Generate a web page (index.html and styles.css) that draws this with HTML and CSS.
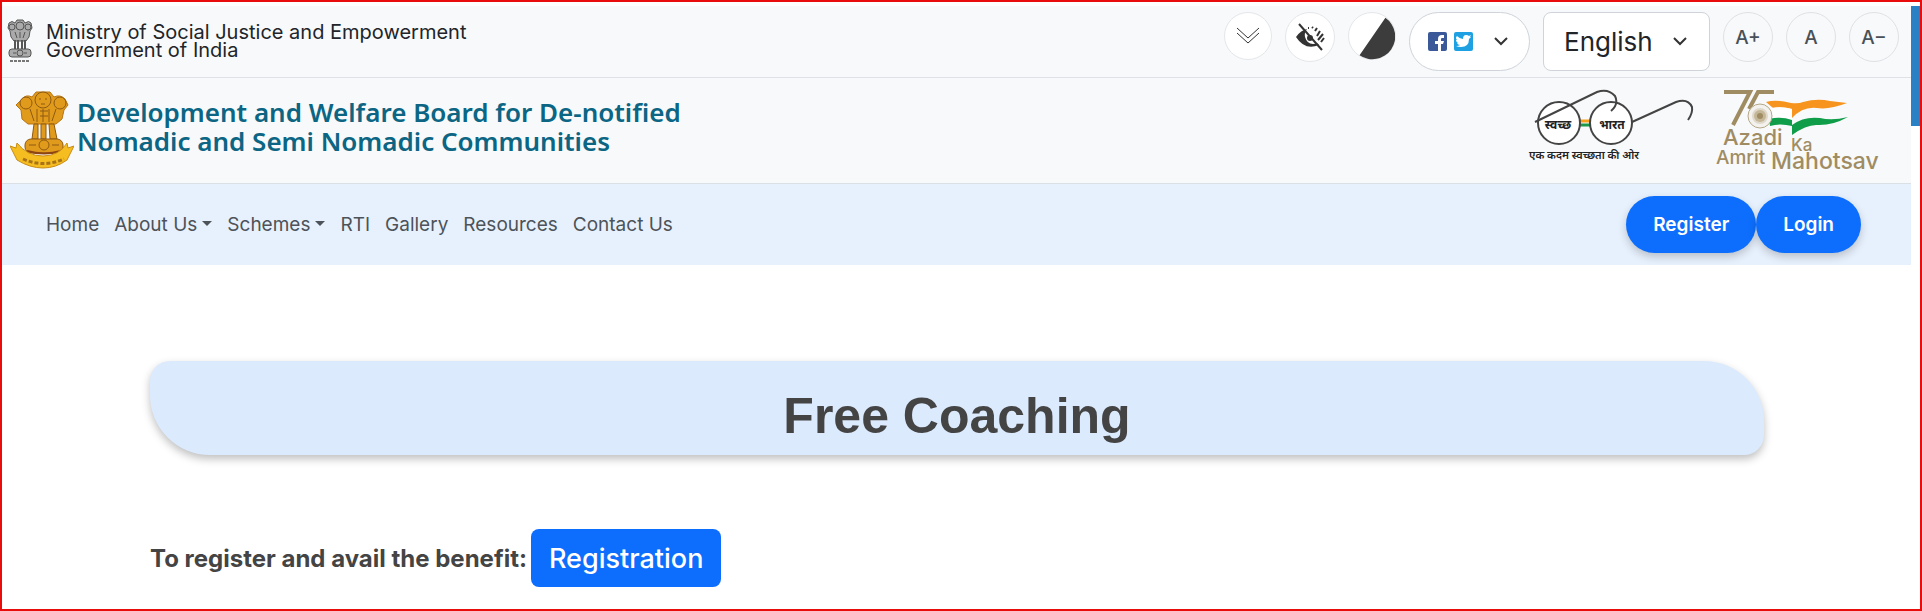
FILE: index.html
```html
<!DOCTYPE html>
<html lang="en">

<head>
    <meta charset="UTF-8">
    <meta name="viewport" content="width=device-width, initial-scale=1.0">
    <title>Free Coaching</title>
    <link rel="stylesheet" href="styles.css">
</head>

<body>
    <div class="page">
        <div class="content">
            <div class="topbar">
                <svg class="emblem-small" viewBox="0 0 26 44" aria-hidden="true">
                    <g fill="#aaa" stroke="#555" stroke-width="1">
                        <path d="M2 4q3-3 6 0l2-3h6l2 3q4-3 6 0l1 5-2 3-1 6-3 4H7l-3-4-1-6-2-3z" />
                        <path d="M8 21v9M11 21v9M15 21v9M18 21v9" stroke-width="2" />
                        <rect x="2" y="30" width="22" height="8" rx="3" />
                        <circle cx="13" cy="7" r="4" />
                        <circle cx="5" cy="8" r="3" />
                        <circle cx="21" cy="8" r="3" />
                        <circle cx="13" cy="34" r="3" />
                        <path d="M8 13l2 6M13 13v6M18 13l-2 6M6 34h3M17 34h3" />
                    </g>
                    <path d="M3 42h20" stroke="#777" stroke-width="2" stroke-dasharray="3 1" />
                </svg>
                <p class="ministry">Ministry of Social Justice and Empowerment<br>Government of India</p>

                <div class="tools">
                    <button class="round small" aria-label="Skip to main content">
                        <svg width="24" height="18" viewBox="0 0 24 18" fill="none" stroke="#333" stroke-width="1">
                            <path d="M1 1l11 10L23 1M1 6l11 10L23 6" />
                        </svg>
                    </button>
                    <button class="round" aria-label="Screen reader">
                        <svg width="30" height="28" viewBox="0 0 30 28" fill="none" stroke="#333">
                            <path d="M1 14Q6 7 12 6q-3 4-2 8 2 7 8 7 3 0 4-1l2 2Q10 28 1 14z" fill="#333" stroke="none" />
                            <path d="M4 1l23 26" stroke-width="2" />
                            <circle cx="15" cy="15" r="3" fill="#333" stroke="none" />
                            <path d="M13 5h1M17 4l1 1M22 5l-2 3M25 8l-3 5M28 11l-5 6M29 15l-3 4" stroke-width="2" />
                        </svg>
                    </button>
                    <button class="round small" aria-label="Contrast">
                        <svg width="48" height="48" viewBox="0 0 48 48">
                            <path d="M38 5A23.6 23.6 0 1 1 11 44z" fill="#3c3c3c" />
                        </svg>
                    </button>
                    <button class="social" aria-label="Social media">
                        <svg width="19" height="19" viewBox="0 0 19 19">
                            <rect width="19" height="19" rx="2" fill="#3b5998" />
                            <path d="M10 19v-7H7V9h3V7q0-4 4-4h2v3h-2q-1 0-1 1v2h3l-1 3h-2v7z" fill="#fff" />
                        </svg>
                        <svg width="19" height="19" viewBox="0 0 19 19">
                            <rect width="19" height="19" rx="2" fill="#1da1e2" />
                            <path d="M3 4q3 3 6 3 0-4 3-4 2 0 3 1l2-1-1 2 1 0-2 2q0 8-8 8-3 0-5-1 3 0 4-1-2 0-3-2h1q-2-1-2-3l1 0q-2-2 0-4z" fill="#fff" />
                        </svg>
                        <svg class="chevron" width="14" height="9" viewBox="0 0 14 9" fill="none" stroke="#333" stroke-width="2">
                            <path d="M1 1l6 6 6-6" />
                        </svg>
                    </button>
                    <select class="language" aria-label="Language">
                        <option>English</option>
                    </select>
                    <button class="round letter">A+</button>
                    <button class="round letter">A</button>
                    <button class="round letter">A−</button>
                </div>
            </div>

            <header class="header">
                <svg class="emblem" viewBox="0 0 64 78" aria-hidden="true">
                    <g fill="#e09a1c" stroke="#8f5a10" stroke-width="1">
                        <path d="M12 8q4-5 10-2l4-5h14l4 5q6-3 11 2l3 6-4 5-2 9-6 5H18l-6-5-1-9-5-5z" stroke="#b87513" />
                        <path d="M24 33l-2 15h6V33zM31 33v15h5V33zM39 33l1 15h7l-3-15z" />
                        <rect x="15" y="48" width="38" height="14" rx="6" />
                        <circle cx="33" cy="9" r="8" />
                        <circle cx="16" cy="12" r="6" />
                        <circle cx="50" cy="12" r="6" />
                        <circle cx="34" cy="54" r="5" />
                        <path d="M29 8h2M35 8h2M31 13h4M20 18l4 12M27 18v13M33 18v13M39 18v13M46 18l-4 12M30 20h8M30 25h8M19 54h7M42 54h7" fill="none" />
                    </g>
                    <path d="M17 60q17 5 34 0" fill="none" stroke="#8f4512" stroke-width="2" />
                    <path d="M0 55l6 2 1-5q10 13 26 13t24-13l1 5 6-2-7 14Q46 77 33 77T7 69z" fill="#f5bd1f" stroke="#c98c12" />
                    <path d="M13 68q20 9 41 0" fill="none" stroke="#a87318" stroke-width="3" stroke-dasharray="4 2" />
                </svg>
                <h1 class="title">Development and Welfare Board for De-notified<br>Nomadic and Semi Nomadic Communities</h1>

                <svg class="swachh" viewBox="0 0 168 80" role="img" aria-label="Swachh Bharat">
                    <path d="M51 33h14" stroke="#f5a11c" stroke-width="3" />
                    <path d="M51 37h14" stroke="#1b9a4a" stroke-width="3" />
                    <g fill="none" stroke="#444" stroke-width="2">
                        <circle cx="32" cy="35" r="21" fill="#fff" />
                        <circle cx="84" cy="35" r="21" fill="#fff" />
                        <path d="M8 34L70 4q11-4 18 4 4 8-4 15" />
                        <path d="M105 34l44-20q12-4 16 5 1 6-4 13" />
                    </g>
                    <g font-weight="700" fill="#222" text-anchor="middle">
                        <text x="31" y="41" font-size="12">स्वच्छ</text>
                        <text x="85" y="41" font-size="12">भारत</text>
                        <text x="57" y="71" font-size="11" font-weight="600">एक कदम स्वच्छता की ओर</text>
                    </g>
                </svg>

                <svg class="azadi" viewBox="0 0 168 84" role="img" aria-label="Azadi Ka Amrit Mahotsav">
                    <g fill="none" stroke="#a08c62" stroke-width="4">
                        <path d="M9 4h26L18 37" />
                        <path d="M59 4H43L34 21" />
                    </g>
                    <path d="M51 14q10-3 25 1 8 1 12-1 14-4 27-1l17 2q-18 7-30 5-14-2-25 10v-9q-9-3-19-1z" fill="#f7941d" />
                    <path d="M56 20q10-2 21 1v11q-10-4-21-2z" fill="#fff" />
                    <path d="M54 31q12-3 23 1v5q12-9 28-7 12 3 28-1-16 9-32 8-10 0-24 10v-9q-12-3-22 0z" fill="#0f9d49" />
                    <circle cx="45" cy="28" r="12" fill="#f4f2ee" stroke="#b5a888" stroke-width="1" />
                    <circle cx="45" cy="28" r="8" fill="#e0d9cb" />
                    <circle cx="45" cy="28" r="6" fill="#c4b798" />
                    <circle cx="45" cy="28" r="3" fill="#a08c62" />
                    <g class="azadi-text" fill="#a08c62">
                        <text x="8" y="57" font-size="22">Azadi</text>
                        <text x="76" y="63" font-size="17">Ka</text>
                        <text x="1" y="76" font-size="19">Amrit</text>
                        <text x="56" y="81" font-size="23">Mahotsav</text>
                    </g>
                </svg>
            </header>

            <nav class="nav">
                <a href="#">Home</a>
                <a href="#" class="dropdown">About Us</a>
                <a href="#" class="dropdown">Schemes</a>
                <a href="#">RTI</a>
                <a href="#">Gallery</a>
                <a href="#">Resources</a>
                <a href="#">Contact Us</a>
                <div class="account">
                    <button class="pill">Register</button>
                    <button class="pill">Login</button>
                </div>
            </nav>

            <main class="main">
                <h2 class="banner">Free Coaching</h2>
                <div class="register">
                    <b>To register and avail the benefit:</b>
                    <button class="registration">Registration</button>
                </div>
            </main>
        </div>
        <div class="scrollbar"></div>
    </div>
</body>

</html>
```
FILE: styles.css
```css
* {
    box-sizing: border-box;
}

body {
    margin: 0;
    font-family: Inter, "Noto Sans", sans-serif;
    color: #212529;
    background-color: #fff;
}

button,
select {
    font-family: inherit;
    color: inherit;
    cursor: pointer;
}

.page {
    display: flex;
    min-height: 100vh;
    padding-top: 4px;
    border: 2px solid #e90c0c;
}

.content {
    flex: 1;
}

.scrollbar {
    width: 9px;
    height: 120px;
    background-color: #2a80c4;
}

/* top bar */
.topbar {
    display: flex;
    height: 72px;
    padding: 6px 12px 0 5px;
    background-color: #f8f9fa;
    border-bottom: 1px solid #dee2e6;
}

.emblem-small {
    width: 26px;
    height: 44px;
    margin-top: 7px;
}

.ministry {
    margin: 11px 0 0 13px;
    font-size: 20px;
    line-height: 18px;
}

.tools {
    display: flex;
    align-items: flex-start;
    gap: 13px;
    margin-left: auto;
}

.round {
    display: flex;
    align-items: center;
    justify-content: center;
    width: 50px;
    height: 50px;
    padding: 0;
    border: 1px solid #e4e7ea;
    border-radius: 50%;
    background-color: #fff;
}

.small {
    width: 48px;
    height: 48px;
}

.letter {
    background-color: #f8f9fa;
    border-color: #dee2e6;
    color: #495057;
    font-size: 19px;
    font-weight: 500;
}

.social {
    display: flex;
    align-items: center;
    gap: 7px;
    width: 121px;
    height: 59px;
    padding: 0 18px;
    border: 1px solid #ced4da;
    border-radius: 30px;
    background-color: #fff;
}

.chevron {
    margin-left: 14px;
}

.language {
    width: 167px;
    height: 59px;
    padding: 0 20px;
    border: 1px solid #ced4da;
    border-radius: 8px;
    appearance: none;
    background: #fff url("data:image/svg+xml,%3Csvg xmlns='http://www.w3.org/2000/svg' width='14' height='9' fill='none' stroke='%23333' stroke-width='2'%3E%3Cpath d='M1 1l6 6 6-6'/%3E%3C/svg%3E") no-repeat right 22px center;
    font-size: 26px;
}

/* header with logos */
.header {
    display: flex;
    align-items: flex-start;
    height: 106px;
    padding: 10px 28px 0 8px;
    background-color: #f8f9fa;
    border-bottom: 1px solid #dbe0e6;
}

.emblem {
    width: 64px;
    height: 78px;
    margin-top: 3px;
}

.title {
    margin: 10px auto 0 3px;
    color: #0b6583;
    font-family: "Noto Sans", sans-serif;
    font-size: 26px;
    font-weight: 600;
    line-height: 29px;
}

.swachh {
    width: 168px;
    height: 80px;
    margin-right: 20px;
}

.azadi {
    width: 168px;
    height: 84px;
    overflow: visible;
}

.azadi-text {
    font-weight: 500;
}

/* navigation */
.nav {
    display: flex;
    align-items: center;
    gap: 15px;
    height: 81px;
    padding: 0 50px 0 44px;
    background-color: #e7f1fd;
}

.nav a {
    color: #4d5358;
    font-size: 19px;
    text-decoration: none;
}

.dropdown::after {
    content: "";
    display: inline-block;
    margin-left: 5px;
    vertical-align: 5px;
    border-top: 5px solid;
    border-left: 5px solid transparent;
    border-right: 5px solid transparent;
}

.account {
    display: flex;
    margin-left: auto;
}

.pill {
    height: 57px;
    padding: 0 27px;
    border: none;
    border-radius: 29px;
    background-color: #0d6efd;
    color: #fff;
    font-size: 19px;
    font-weight: 600;
    box-shadow: 0 4px 8px rgba(0, 0, 0, 0.2);
}

/* page body */
.main {
    padding: 96px 147px 0 148px;
}

.banner {
    height: 94px;
    margin: 0;
    padding-top: 8px;
    border-radius: 20px 60px 20px 60px;
    background-color: #dceafe;
    box-shadow: 0 4px 8px rgba(0, 0, 0, 0.25);
    color: #444;
    font-family: "Liberation Sans", Arial, sans-serif;
    font-size: 50px;
    line-height: 94px;
    text-align: center;
}

.register {
    display: flex;
    align-items: center;
    gap: 4px;
    margin-top: 74px;
    color: #444;
    font-size: 24px;
}

.registration {
    height: 58px;
    padding: 0 18px;
    border: none;
    border-radius: 8px;
    background-color: #0d6efd;
    color: #fff;
    font-size: 27px;
    font-weight: 500;
}
```
